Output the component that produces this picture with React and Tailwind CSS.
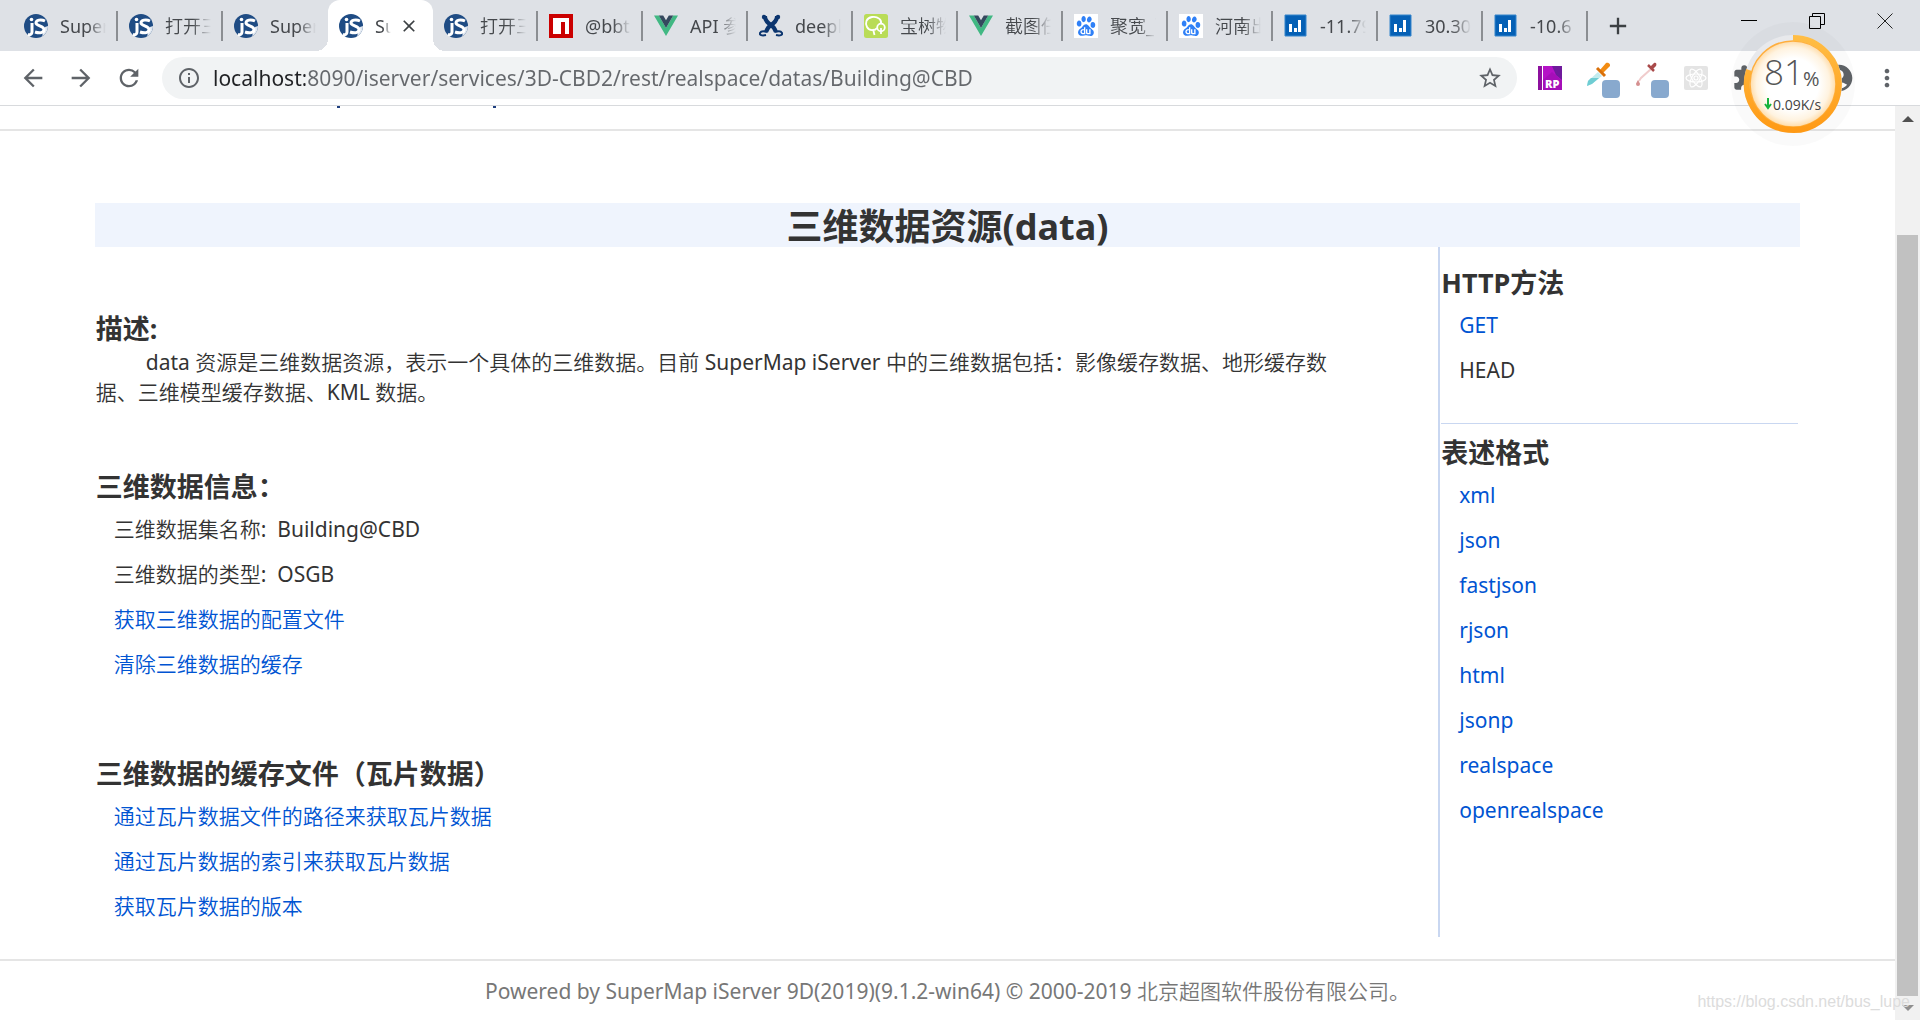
import React, { useState } from 'react';
import {
    MdArrowBack,
    MdArrowForward,
    MdRefresh,
    MdInfoOutline,
    MdStarBorder,
    MdMoreVert,
    MdExtension,
    MdAccountCircle,
    MdAdd,
    MdClose
} from 'react-icons/md';
import { SiBaidu } from 'react-icons/si';
import clsx from 'clsx';

// --- Favicons ---
const ServerIcon = () => (
    <svg viewBox="0 0 24 24" className="size-6 shrink-0" aria-hidden="true">
        <circle cx="12" cy="12" r="12" fill="#1f4c84" />
        <path d="M20.5 20.5A12 12 0 0 0 24 12l-3 1-3 9z" fill="#dfe6ef" />
        <g fill="none" stroke="#fff" strokeWidth="3">
            <path d="M8 9v9c0 2-1.500 3-4 2.500" />
            <path d="M21 7c-4-2-9-1-9 2s8 3 8 6.500-4.500 4-9 2.500" />
        </g>
        <circle cx="7.500" cy="5.500" r="1.800" fill="#fff" />
    </svg>
);

const NpmIcon = () => (
    <svg viewBox="0 0 24 24" className="size-6 shrink-0" aria-hidden="true">
        <path d="M0 0h24v24H0z" fill="#cb0000" />
        <path d="M4 4h16v16h-4V8h-4v12H4z" fill="#fff" />
    </svg>
);

const VueIcon = () => (
    <svg viewBox="0 0 24 24" className="size-6 shrink-0" aria-hidden="true">
        <path d="M0 1.500h4.800L12 14l7.200-12.500H24L12 22z" fill="#41b883" />
        <path d="M4.800 1.500h4.400L12 6.300l2.800-4.800h4.400L12 14z" fill="#34495e" />
    </svg>
);

const DeepIcon = () => (
    <svg viewBox="0 0 24 24" className="size-6 shrink-0" aria-hidden="true">
        <g fill="none" stroke="#0b356f">
            <path d="M6 2c0 5 3 7 6 9s4 4 5 7M18 2c0 5-3 7-6 9s-4 4-5 7" strokeWidth="4" />
            <path d="M8 18c-3-1-6-1-7 1s2 3 6 2M16 18c3-1 6-1 7 1s-2 3-6 2" strokeWidth="2" />
        </g>
        <circle cx="5" cy="3" r="2.200" fill="#0b356f" />
        <circle cx="19" cy="3" r="2.200" fill="#0b356f" />
    </svg>
);

const TreeIcon = () => (
    <svg viewBox="0 0 24 24" className="size-6 shrink-0" aria-hidden="true">
        <rect width="24" height="24" rx="2.500" fill="#b9dc57" />
        <g fill="none" stroke="#fff" strokeWidth="1.800">
            <path d="M13 14c-2 3-8 3-10-1s-1-9 5-10 10 3 9 7" />
            <path d="M9 15l1.500 6" />
            <circle cx="17" cy="13.500" r="3.800" />
            <path d="M17 14v6" />
        </g>
    </svg>
);

const BaiduIcon = () => (
    <span className="flex size-6 shrink-0 items-center justify-center bg-white">
        <SiBaidu className="size-5 text-[#2f80f7]" />
    </span>
);

const ChartIcon = () => (
    <svg viewBox="0 0 24 24" className="size-6 shrink-0" aria-hidden="true">
        <path d="M1 1h21v21H1z" fill="#0560b5" stroke="#3585cc" strokeWidth="1" />
        <path d="M5 10h3v8H5zM10 14h3v4h-3zM14 6h3v12h-3z" fill="#fff" />
    </svg>
);

const tabs = [
    { title: 'SuperMap', icon: ServerIcon },
    { title: '打开三维', icon: ServerIcon },
    { title: 'SuperMap', icon: ServerIcon },
    { title: 'SuperMap', icon: ServerIcon },
    { title: '打开三维', icon: ServerIcon },
    { title: '@bbt', icon: NpmIcon },
    { title: 'API 参考', icon: VueIcon },
    { title: 'deepl', icon: DeepIcon },
    { title: '宝树物', icon: TreeIcon },
    { title: '截图任', icon: VueIcon },
    { title: '聚宽_百', icon: BaiduIcon },
    { title: '河南出', icon: BaiduIcon },
    { title: '-11.79', icon: ChartIcon },
    { title: '30.30', icon: ChartIcon },
    { title: '-10.6', icon: ChartIcon }
];

const formats = ['xml', 'json', 'fastjson', 'rjson', 'html', 'jsonp', 'realspace', 'openrealspace'];

const tileLinks = ['通过瓦片数据文件的路径来获取瓦片数据', '通过瓦片数据的索引来获取瓦片数据', '获取瓦片数据的版本'];

// --- Browser chrome ---
const Tab = ({ tab, active, next, onSelect }) => {
    const Icon = tab.icon;
    return (
        <div className={clsx('relative flex w-[105px] items-center', active && 'rounded-t-xl bg-white')}>
            {active && (
                <>
                    <span className="absolute bottom-0 -left-3 size-3 bg-[radial-gradient(circle_at_0_0,transparent_12px,white_12px)]" />
                    <span className="absolute bottom-0 -right-3 size-3 bg-[radial-gradient(circle_at_100%_0,transparent_12px,white_12px)]" />
                </>
            )}
            <button type="button" onClick={onSelect} className="flex min-w-0 flex-1 items-center gap-3 pl-[11px] text-left">
                <Icon />
                <span
                    className={clsx(
                        'overflow-hidden whitespace-nowrap text-lg leading-6 text-[#45484c]',
                        active
                            ? 'w-4 mask-[linear-gradient(to_right,black_50%,transparent)]'
                            : 'w-[46px] mask-[linear-gradient(to_right,black_60%,transparent)]'
                    )}
                >
                    {tab.title}
                </span>
            </button>
            {active && (
                <button type="button" aria-label="Close tab" className="mr-3.5 text-[#3c4043]">
                    <MdClose className="size-5" />
                </button>
            )}
            {!active && !next && <span className="h-[30px] w-0.5 bg-[#8b8e92]" />}
        </div>
    );
};

const TabStrip = () => {
    const [current, setCurrent] = useState(3);
    return (
        <div className="flex h-[51px] bg-[#dee1e6] pl-[13px]">
            {tabs.map((tab, i) => (
                <Tab key={i} tab={tab} active={i === current} next={i + 1 === current} onSelect={() => setCurrent(i)} />
            ))}
            <button type="button" aria-label="New tab" className="ml-4 text-[#3c4043]">
                <MdAdd className="size-7" />
            </button>
            <div className="ml-auto flex h-[42px] items-center gap-[52px] pr-[27px]">
                <button type="button" aria-label="Minimize">
                    <svg viewBox="0 0 16 16" className="size-4"><path d="M0 7.500h16" stroke="#000" /></svg>
                </button>
                <button type="button" aria-label="Restore">
                    <svg viewBox="0 0 16 16" className="size-4" fill="none" stroke="#000">
                        <path d="M.5 3.500h11v12H.5zM3.500 3.500v-3h12v11h-4" />
                    </svg>
                </button>
                <button type="button" aria-label="Close">
                    <svg viewBox="0 0 16 16" className="size-4"><path d="M.5.5l15 15M15.500.5l-15 15" stroke="#222" /></svg>
                </button>
            </div>
        </div>
    );
};

const Swatch = () => <span className="absolute right-0 bottom-0 size-[18px] rounded-sm bg-[#88a9ce]" />;

const Dropper = () => (
    <span className="relative block h-9 w-[34px]">
        <svg viewBox="0 0 24 24" className="size-6" aria-hidden="true">
            <path d="M12 10l4 4-9 7-6 3 1-5z" fill="#c3ecee" />
            <path d="M5 16h8l-7 6-5 2 1-5z" fill="#6fcdd3" />
            <path d="M14 8l6-7c2-1 5 1 4 3l-7 7z" fill="#f28c13" />
            <path d="M11 6l8 8" stroke="#d9700a" strokeWidth="3" />
        </svg>
        <Swatch />
    </span>
);

const BloodDropper = () => (
    <span className="relative block h-9 w-[34px]">
        <svg viewBox="0 0 24 24" className="size-6" aria-hidden="true">
            <path d="M16 7L6 16l-2 3" fill="none" stroke="#f0cccc" strokeWidth="2" />
            <path d="M15 5l4-4c2-1 3 1 2 3l-4 4z" fill="#a94a4a" />
            <path d="M13 3l6 6" stroke="#a94a4a" strokeWidth="2.500" />
            <path d="M3 18c1 2 2 3 2 4a2 2 0 0 1-4 0c0-1 1-2 2-4z" fill="#d59090" />
        </svg>
        <Swatch />
    </span>
);

const SpeedGauge = () => (
    <div className="absolute top-[22px] right-[65px] size-[124px] rounded-full bg-black/[0.02]">
        <svg viewBox="0 0 124 124" className="size-full" aria-label="81%">
            <defs>
                <radialGradient id="gauge-face">
                    <stop offset="0.600" stopColor="#fff" />
                    <stop offset="0.850" stopColor="#fff3e0" />
                    <stop offset="1" stopColor="#ffdca8" />
                </radialGradient>
                <linearGradient id="gauge-ring" x1="0" y1="0" x2="0" y2="1">
                    <stop offset="0" stopColor="#ffbd45" />
                    <stop offset="1" stopColor="#ff9a15" />
                </linearGradient>
            </defs>
            <circle cx="62" cy="62" r="49" fill="#e8e9ec" />
            <circle cx="62" cy="62" r="43" fill="url(#gauge-face)" stroke="#ffae3d" strokeWidth="1.500" />
            <path d="M62 16A46 46 0 1 1 18 48" fill="none" stroke="url(#gauge-ring)" strokeWidth="6" />
            <path d="M37 76v9M34 82l3 4 3-4" fill="none" stroke="#17b33c" strokeWidth="2" />
            <text x="33" y="63" fontSize="35" fontWeight="300" fill="#555" fontFamily="Open Sans">81</text>
            <text x="72" y="64" fontSize="20" fill="#555" fontFamily="Open Sans">%</text>
            <text x="42" y="88" fontSize="14" fill="#444" fontFamily="Open Sans">0.09K/s</text>
        </svg>
    </div>
);

const Toolbar = () => (
    <div className="flex h-[55px] items-center border-b border-[#d8dadd] bg-white text-[#5f6368]">
        <div className="flex gap-5 pr-[19px] pl-[19px]">
            <button type="button" aria-label="Back"><MdArrowBack className="size-7" /></button>
            <button type="button" aria-label="Forward"><MdArrowForward className="size-7" /></button>
            <button type="button" aria-label="Reload"><MdRefresh className="size-7" /></button>
        </div>
        <div className="flex h-[42px] flex-1 items-center rounded-full bg-[#f1f3f4] pr-3.5 pl-[15px]">
            <MdInfoOutline className="size-6 shrink-0" />
            <input
                type="text"
                aria-label="Address"
                defaultValue="localhost:8090/iserver/services/3D-CBD2/rest/realspace/datas/Building@CBD"
                className="ml-3 min-w-0 flex-1 bg-[linear-gradient(to_right,#202124_92px,#65686c_92px)] bg-clip-text text-[21px] leading-8 text-transparent outline-none"
            />
            <button type="button" aria-label="Bookmark"><MdStarBorder className="size-[26px]" /></button>
        </div>
        <div className="flex items-center gap-5 pr-[19px] pl-[21px]">
            <svg viewBox="0 0 24 24" className="size-6" aria-hidden="true">
                <rect width="24" height="24" rx="1" fill="#b412c6" />
                <path d="M14 0h10v14l-6-5z" fill="#6f1a9c" />
                <path d="M5 14l9-8 10 9v9H5z" fill="#a50fb8" />
                <path d="M0 0h4v24H0z" fill="#8d109e" />
                <path d="M4.500 0v24" stroke="#fff" />
                <text x="7" y="21.500" fontSize="11" fontWeight="800" fill="#fff" fontFamily="Open Sans">RP</text>
            </svg>
            <div className="flex items-center gap-[15px] pt-1 pl-1">
                <Dropper />
                <BloodDropper />
                <svg viewBox="0 0 24 24" className="-mt-1 size-6" aria-hidden="true">
                    <rect width="24" height="24" rx="2" fill="#e4e4e4" />
                    <g fill="none" stroke="#fff" strokeWidth="1.200">
                        <ellipse cx="12" cy="12" rx="10" ry="4" />
                        <ellipse cx="12" cy="12" rx="10" ry="4" transform="rotate(60 12 12)" />
                        <ellipse cx="12" cy="12" rx="10" ry="4" transform="rotate(120 12 12)" />
                        <circle cx="12" cy="12" r="2" />
                    </g>
                </svg>
            </div>
            <button type="button" aria-label="Extensions" className="ml-1"><MdExtension className="size-7" /></button>
            <div className="flex items-center gap-[18px] pl-[43px]">
                <button type="button" aria-label="Profile"><MdAccountCircle className="size-8" /></button>
                <button type="button" aria-label="Menu"><MdMoreVert className="size-7" /></button>
            </div>
        </div>
    </div>
);

const Scrollbar = () => (
    <div className="flex w-[25px] shrink-0 flex-col items-center bg-[#f1f1f1]">
        <button type="button" aria-label="Scroll up" className="flex h-[25px] items-center">
            <svg viewBox="0 0 12 6" className="h-1.5 w-3"><path d="M6 0l6 6H0z" fill="#505050" /></svg>
        </button>
        <div className="mt-[104px] w-[21px] flex-1 bg-[#c1c1c1]" />
        <button type="button" aria-label="Scroll down" className="flex h-6 items-center">
            <svg viewBox="0 0 12 6" className="h-1.5 w-3"><path d="M6 6l6-6H0z" fill="#8f8f8f" /></svg>
        </button>
    </div>
);

// --- Page parts ---
const Heading = ({ children }) => (
    <h2 className="font-['Noto_Sans','Noto_Sans_CJK_SC',sans-serif] text-[27px] leading-9 font-bold">{children}</h2>
);

const Items = ({ children }) => <ul className="pt-0.5 pl-[18px] text-[21px] leading-[45px]">{children}</ul>;

const LinkItem = ({ children }) => (
    <li>
        <a href="#" className="text-[#0054d2] hover:underline">{children}</a>
    </li>
);

const App = () => {
    return (
        <div className="relative flex min-h-screen flex-col bg-white font-['Noto_Sans','Noto_Sans_CJK_SC_DemiLight','Noto_Sans_CJK_SC_Light','Noto_Sans_CJK_SC',sans-serif] text-[#333]">
            <TabStrip />
            <Toolbar />
            <SpeedGauge />

            <div className="flex flex-1">
                <div className="flex min-w-0 flex-1 flex-col">
                    {/* Bottom edge of the scrolled banner */}
                    <header className="flex h-[25px] gap-[153px] border-b-2 border-[#e5e5e5] pl-[337px]">
                        <span className="h-0.5 w-[3px] bg-[#1f3f7f]" />
                        <span className="h-0.5 w-[3px] bg-[#1f3f7f]" />
                    </header>

                    <div className="mx-auto w-9/10 pt-[72px]">
                        <h1 className="bg-[#eff4fd] pt-1 text-center font-['Noto_Sans','Noto_Sans_CJK_SC',sans-serif] text-4xl leading-10 font-bold">
                            三维数据资源(data)
                        </h1>
                        <div className="flex">
                            <main className="flex-1 pt-16 pb-2 pl-px">
                                <Heading>描述:</Heading>
                                <p className="mr-[96px] indent-[50px] text-[21px] leading-[30px]">
                                    data 资源是三维数据资源，表示一个具体的三维数据。目前 SuperMap iServer 中的三维数据包括：影像缓存数据、地形缓存数据、三维模型缓存数据、KML 数据。
                                </p>
                                <div className="pt-[62px]">
                                    <Heading>三维数据信息：</Heading>
                                    <Items>
                                        <li>三维数据集名称:&nbsp; Building@CBD</li>
                                        <li>三维数据的类型:&nbsp; OSGB</li>
                                        <LinkItem>获取三维数据的配置文件</LinkItem>
                                        <LinkItem>清除三维数据的缓存</LinkItem>
                                    </Items>
                                </div>
                                <div className="pt-[69px]">
                                    <Heading>三维数据的缓存文件（瓦片数据）</Heading>
                                    <Items>
                                        {tileLinks.map((label) => (
                                            <LinkItem key={label}>{label}</LinkItem>
                                        ))}
                                    </Items>
                                </div>
                            </main>

                            <aside className="w-[362px] border-l-2 border-[#c9d7f1] pt-[18px] pr-0.5 pl-px">
                                <Heading>HTTP方法</Heading>
                                <Items>
                                    <LinkItem>GET</LinkItem>
                                    <li>HEAD</li>
                                </Items>
                                <div className="mt-[30px] border-t border-[#c9d7f1] pt-[11px]">
                                    <Heading>表述格式</Heading>
                                    <Items>
                                        {formats.map((format) => (
                                            <LinkItem key={format}>{format}</LinkItem>
                                        ))}
                                    </Items>
                                </div>
                            </aside>
                        </div>
                    </div>

                    <footer className="mt-[22px] border-t-2 border-[#e5e5e5] pt-3 text-center text-[21px] leading-9 text-[#777]">
                        Powered by SuperMap iServer 9D(2019)(9.1.2-win64) © 2000-2019 北京超图软件股份有限公司。
                    </footer>
                </div>
                <Scrollbar />
            </div>

            <span className="absolute right-2.5 bottom-1.5 font-['Liberation_Sans',sans-serif] text-base text-[#dcdcdc]">
                https://blog.csdn.net/bus_lupe
            </span>
        </div>
    );
};

export default App;
